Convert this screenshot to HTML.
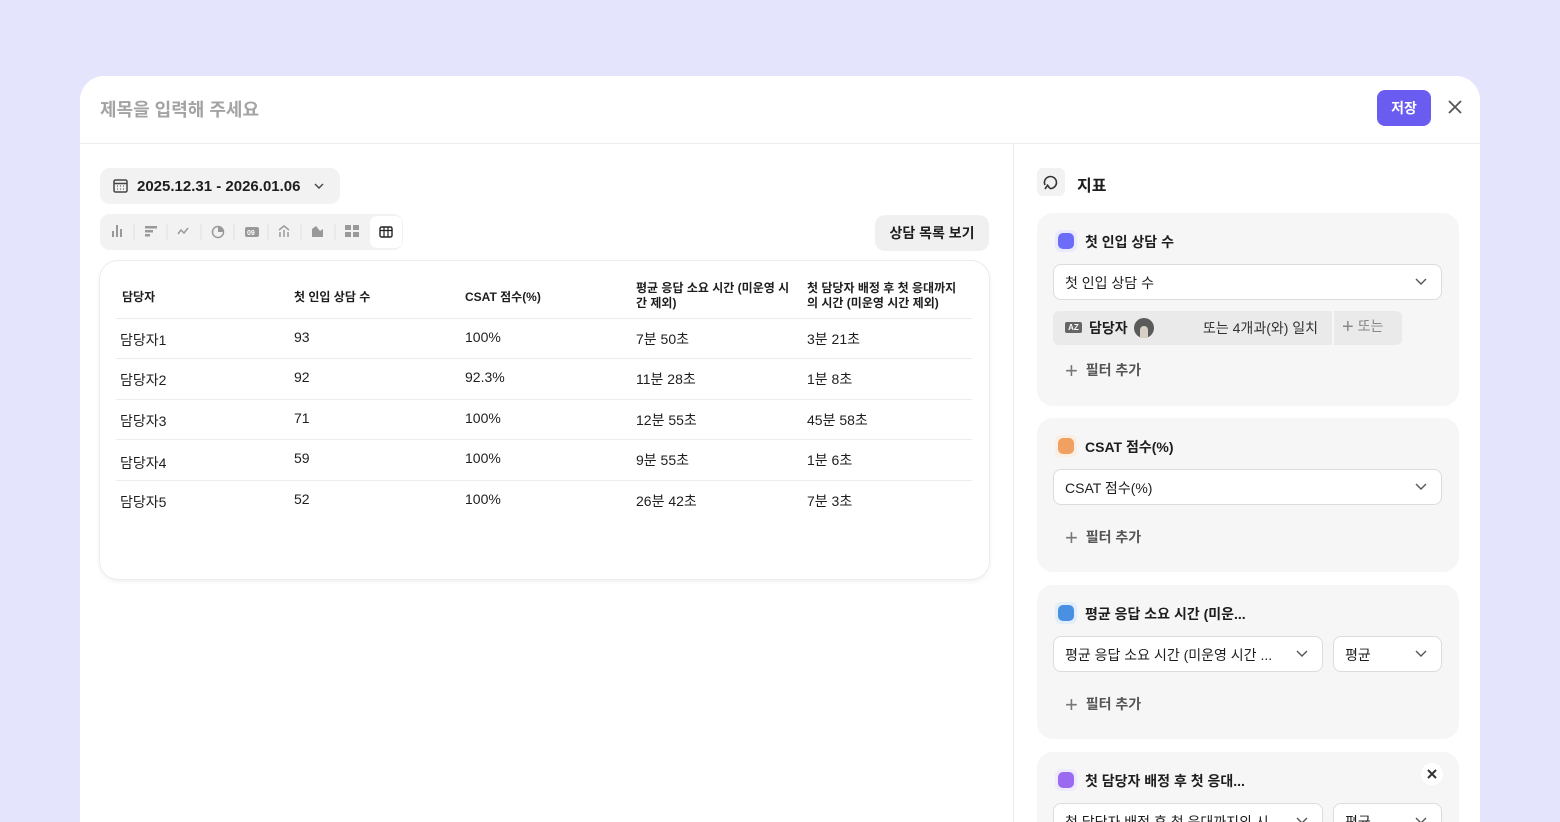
<!DOCTYPE html>
<html style="width:1560px;height:822px;overflow:hidden"><head><meta charset="utf-8"><style>
*{box-sizing:border-box;margin:0;padding:0}
body{width:1560px;height:822px;overflow:hidden;background:#e5e4fd;font-family:"Liberation Sans","Noto Sans CJK KR",sans-serif;color:#1e1e1e;position:relative}
.panel{position:absolute;left:80px;top:76px;width:1400px;height:746px;background:#fff;border-radius:24px 24px 0 0;overflow:hidden}
.hdr{position:absolute;left:0;top:0;width:1400px;height:68px;border-bottom:1px solid #ececec}
.title{position:absolute;left:20px;top:20px;font-size:18px;font-weight:700;color:#a3a3a3}
.save{position:absolute;left:1297px;top:14px;width:54px;height:36px;background:#6a5cf0;border-radius:8px;color:#fff;font-size:14px;font-weight:700;text-align:center;line-height:36px}
.close{position:absolute;left:1366px;top:22px}
.vdiv{position:absolute;left:933px;top:68px;width:1px;height:740px;background:#ececec}
.abs{position:absolute}
.date{left:20px;top:92px;width:240px;height:36px;background:#f2f2f2;border-radius:10px}
.date span{position:absolute;left:37px;top:10px;font-size:15px;font-weight:700}
.tb{left:20px;top:138px;width:303px;height:36px;background:#f2f2f2;border-radius:10px}
.btn2{left:795px;top:139px;width:114px;height:36px;background:#f0f0f0;border-radius:10px;font-size:14px;font-weight:700;text-align:center;line-height:36px}
.card{left:20px;top:185px;width:889px;height:318px;border-radius:18px;background:#fff;box-shadow:0 0 0 1px #ececec,0 2px 6px rgba(0,0,0,.08)}
.th{position:absolute;font-size:12px;font-weight:700;line-height:15px}
.td{position:absolute;font-size:14px}
.hl{position:absolute;left:16px;width:856px;height:1px;background:#ececec}
.sec{position:absolute;left:957px;width:422px;background:#f6f6f6;border-radius:16px}
.dot{position:absolute;left:18px;width:22px;height:22px;border-radius:6px}
.dot i{position:absolute;left:3px;top:3px;width:16px;height:16px;border-radius:5px}
.sname{position:absolute;left:48px;font-size:14px;font-weight:700}
.sel{position:absolute;height:36px;background:#fff;border:1px solid #dcdcdc;border-radius:8px;font-size:14px;padding:8px 11px;white-space:nowrap;overflow:hidden}
.chev{position:absolute;right:14px;top:13px}
.add{position:absolute;left:28px;font-size:14px;font-weight:700;color:#555}
.add b{font-weight:300;font-size:22px;color:#777;vertical-align:-3px;margin-right:4px}
</style></head><body>
<div class="panel">
<div class="hdr"><div class="title">제목을 입력해 주세요</div><div class="save">저장</div>
<svg class="close" width="18" height="18" viewBox="0 0 18 18"><path d="M3 3L15 15M15 3L3 15" stroke="#555" stroke-width="1.8"/></svg></div>
<div class="vdiv"></div>
<div class="abs date"><svg style="position:absolute;left:13px;top:11px" width="15" height="14" viewBox="0 0 15 14"><rect x="1" y="1" width="13" height="12" rx="1.5" fill="none" stroke="#444" stroke-width="1.5"/><path d="M1 4.5H14" stroke="#444" stroke-width="1.5"/><path d="M4 7h1M7 7h1M10 7h1M4 10h1M7 10h1M10 10h1" stroke="#444"/></svg><span>2025.12.31 - 2026.01.06</span><svg style="position:absolute;left:214px;top:15px" width="10" height="7"><path d="M1 1l4 4 4-4" fill="none" stroke="#444" stroke-width="1.4"/></svg></div>
<div class="abs tb">
<svg width="303" height="36" viewBox="0 0 303 36" style="position:absolute;left:0;top:0">
<g fill="#999"><rect x="12" y="17" width="2" height="6"/><rect x="16" y="11" width="2" height="12"/><rect x="20" y="15" width="2" height="8"/>
<rect x="45" y="12" width="12" height="2.5"/><rect x="45" y="16" width="8" height="2.5"/><rect x="45" y="20" width="5" height="2.5"/>
<rect x="145" y="13" width="14" height="10" rx="2"/>
<path d="M212 23v-8l4-3 4 5 3-2v8z"/><rect x="245" y="11" width="6" height="5"/><rect x="253" y="11" width="6" height="5"/><rect x="245" y="18" width="6" height="5"/><rect x="253" y="18" width="6" height="5"/></g>
<text x="147" y="21" font-size="7" fill="#fff" font-family="Liberation Sans" font-weight="700">09</text>
<path d="M78 20l3-4 3 3 4-5" fill="none" stroke="#999" stroke-width="1.5"/>
<circle cx="118" cy="18" r="5.5" fill="none" stroke="#999" stroke-width="1.5"/><path d="M118 12.5A5.5 5.5 0 0 1 123.5 18H118z" fill="#999"/>
<path d="M180 23v-5M184 23v-7M188 23v-5M179 16l5-4 5 4" fill="none" stroke="#999" stroke-width="1.5"/>
<g stroke="#e0e0e0"><path d="M34 10v16M67 10v16M101 10v16M134 10v16M168 10v16M201 10v16M235 10v16"/></g>
<rect x="270" y="2" width="32" height="32" rx="7" fill="#fff"/>
<rect x="280" y="13" width="12" height="10" rx="1.5" fill="none" stroke="#222" stroke-width="1.4"/><path d="M280 16.5h12M284 13v10M288 13v10" stroke="#222" stroke-width="1.2"/>
</svg></div>
<div class="abs btn2">상담 목록 보기</div>
<div class="abs card">
<div class="th" style="left:22px;top:29px">담당자</div>
<div class="th" style="left:194px;top:29px">첫 인입 상담 수</div>
<div class="th" style="left:365px;top:29px">CSAT 점수(%)</div>
<div class="th" style="left:536px;top:20px">평균 응답 소요 시간 (미운영 시<br>간 제외)</div>
<div class="th" style="left:707px;top:20px">첫 담당자 배정 후 첫 응대까지<br>의 시간 (미운영 시간 제외)</div>
<div class="hl" style="top:57px"></div><div class="hl" style="top:97px"></div><div class="hl" style="top:138px"></div><div class="hl" style="top:178px"></div><div class="hl" style="top:219px"></div>
<div class="td" style="left:20px;top:69px">담당자1</div><div class="td" style="left:194px;top:68px">93</div><div class="td" style="left:365px;top:68px">100%</div><div class="td" style="left:536px;top:68px">7분 50초</div><div class="td" style="left:707px;top:68px">3분 21초</div>
<div class="td" style="left:20px;top:109px">담당자2</div><div class="td" style="left:194px;top:108px">92</div><div class="td" style="left:365px;top:108px">92.3%</div><div class="td" style="left:536px;top:108px">11분 28초</div><div class="td" style="left:707px;top:108px">1분 8초</div>
<div class="td" style="left:20px;top:150px">담당자3</div><div class="td" style="left:194px;top:149px">71</div><div class="td" style="left:365px;top:149px">100%</div><div class="td" style="left:536px;top:149px">12분 55초</div><div class="td" style="left:707px;top:149px">45분 58초</div>
<div class="td" style="left:20px;top:192px">담당자4</div><div class="td" style="left:194px;top:189px">59</div><div class="td" style="left:365px;top:189px">100%</div><div class="td" style="left:536px;top:189px">9분 55초</div><div class="td" style="left:707px;top:189px">1분 6초</div>
<div class="td" style="left:20px;top:231px">담당자5</div><div class="td" style="left:194px;top:230px">52</div><div class="td" style="left:365px;top:230px">100%</div><div class="td" style="left:536px;top:230px">26분 42초</div><div class="td" style="left:707px;top:230px">7분 3초</div>
</div>
<!-- right -->
<div class="abs" style="left:957px;top:92px;width:28px;height:28px;background:#f2f2f2;border-radius:6px"><svg width="28" height="28"><path d="M8 17a6 6 0 1 1 5 3.5M13 20.5l-3-4M8 21l2-3" fill="none" stroke="#333" stroke-width="1.6"/></svg></div>
<div class="abs" style="left:997px;top:96px;font-size:16px;font-weight:700">지표</div>

<div class="sec" style="top:137px;height:193px">
<div class="dot" style="top:17px;background:#ebeafd"><i style="background:#6b6cf7"></i></div><div class="sname" style="top:19px">첫 인입 상담 수</div>
<div class="sel" style="left:16px;top:51px;width:389px">첫 인입 상담 수<svg class="chev" width="12" height="8"><path d="M1 1l5 5 5-5" fill="none" stroke="#555" stroke-width="1.4"/></svg></div>
<div class="abs" style="left:16px;top:98px;width:349px;height:34px;background:#eaeaea;border-radius:6px">
<div class="abs" style="left:12px;top:11px;width:17px;height:11px;background:#666;border-radius:2px;color:#fff;font-size:8px;font-weight:700;text-align:center;line-height:11px">AZ</div>
<div class="abs" style="left:36px;top:7px;font-size:14px;font-weight:700">담당자</div>
<div class="abs" style="left:81px;top:7px;width:20px;height:20px;border-radius:50%;background:#5a5a5a;overflow:hidden"><div style="position:absolute;left:6px;top:8px;width:8px;height:12px;background:#d8d0c4;border-radius:4px 4px 0 0"></div></div>
<div class="abs" style="left:150px;top:7px;font-size:14px;color:#333">또는 4개과(와) 일치</div>
<div class="abs" style="left:279px;top:0;width:2px;height:34px;background:#f6f6f6"></div>
<div class="abs" style="left:289px;top:5px;font-size:14px;color:#888"><span style="font-size:20px;font-weight:300;vertical-align:-2px">+</span> 또는</div></div>
<div class="add" style="top:145px"><b>+</b> 필터 추가</div></div>

<div class="sec" style="top:342px;height:154px">
<div class="dot" style="top:17px;background:#fbeee2"><i style="background:#f0a060"></i></div><div class="sname" style="top:19px">CSAT 점수(%)</div>
<div class="sel" style="left:16px;top:51px;width:389px">CSAT 점수(%)<svg class="chev" width="12" height="8"><path d="M1 1l5 5 5-5" fill="none" stroke="#555" stroke-width="1.4"/></svg></div>
<div class="add" style="top:107px"><b>+</b> 필터 추가</div></div>

<div class="sec" style="top:509px;height:154px">
<div class="dot" style="top:17px;background:#e2eefa"><i style="background:#4a90e2"></i></div><div class="sname" style="top:19px">평균 응답 소요 시간 (미운...</div>
<div class="sel" style="left:16px;top:51px;width:270px">평균 응답 소요 시간 (미운영 시간 ...<svg class="chev" width="12" height="8" style="background:#fff"><path d="M1 1l5 5 5-5" fill="none" stroke="#555" stroke-width="1.4"/></svg></div>
<div class="sel" style="left:296px;top:51px;width:109px">평균<svg class="chev" width="12" height="8"><path d="M1 1l5 5 5-5" fill="none" stroke="#555" stroke-width="1.4"/></svg></div>
<div class="add" style="top:107px"><b>+</b> 필터 추가</div></div>

<div class="sec" style="top:676px;height:154px">
<div class="dot" style="top:17px;background:#f0eafd"><i style="background:#9a6af0"></i></div><div class="sname" style="top:19px">첫 담당자 배정 후 첫 응대...</div>
<div class="abs" style="left:384px;top:11px;width:22px;height:22px;border-radius:50%;background:#fff"><svg width="22" height="22"><path d="M7 7l8 8M15 7l-8 8" stroke="#333" stroke-width="2"/></svg></div>
<div class="sel" style="left:16px;top:51px;width:270px">첫 담당자 배정 후 첫 응대까지의 시<svg class="chev" width="12" height="8" style="background:#fff"><path d="M1 1l5 5 5-5" fill="none" stroke="#555" stroke-width="1.4"/></svg></div>
<div class="sel" style="left:296px;top:51px;width:109px">평균<svg class="chev" width="12" height="8"><path d="M1 1l5 5 5-5" fill="none" stroke="#555" stroke-width="1.4"/></svg></div></div>
</div>
</body></html>
